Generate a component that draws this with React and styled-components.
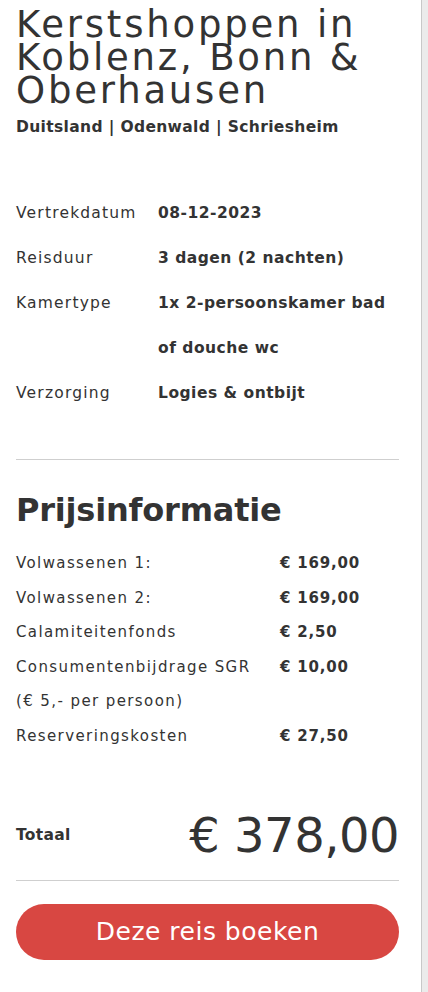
import React from "react";
import styled, { createGlobalStyle } from "styled-components";

const Global = createGlobalStyle`
  html, body { margin: 0; padding: 0; background: #ebebeb; }
  body { font-family: "DejaVu Sans", "Noto Sans", sans-serif; color: #333; }
  * { box-sizing: border-box; }
`;

const Page = styled.div`
  display: flex;
  min-height: 992px;
  background: #ebebeb;
`;

const Panel = styled.div`
  width: 422px;
  background: #fff;
  border-right: 1px solid #c8c8c8;
  padding: 8px 22px 0 16px;
  display: flex;
  flex-direction: column;
`;

const Title = styled.h1`
  margin: 0;
  font-weight: 400;
  font-size: 37px;
  line-height: 33px;
  letter-spacing: 2.8px;
  color: #333;
`;

const Sub = styled.div`
  margin-top: 10px;
  font-weight: 700;
  font-size: 15.5px;
  line-height: 20px;
  letter-spacing: 0.35px;
`;

const Details = styled.div`
  margin-top: 54px;
  display: grid;
  grid-template-columns: 142px 1fr;
`;

const DLabel = styled.div`
  font-size: 15.5px;
  line-height: 45px;
  letter-spacing: 1.2px;
`;

const DValue = styled.div`
  font-size: 15.5px;
  line-height: 45px;
  font-weight: 700;
  letter-spacing: 0.5px;
`;

const Rule = styled.hr`
  border: 0;
  border-top: 1px solid #cfcfcf;
  margin: ${(p) => p.$m || "0"};
`;

const H2 = styled.h2`
  margin: 30px 0 16px;
  font-size: 32px;
  line-height: 40px;
  font-weight: 700;
  letter-spacing: -0.2px;
`;

const Prices = styled.div`
  display: grid;
  grid-template-columns: 264px 1fr;
`;

const PLabel = styled.div`
  font-size: 15px;
  line-height: 34.6px;
  letter-spacing: 1.4px;
  white-space: nowrap;
`;

const PValue = styled.div`
  font-size: 15px;
  line-height: 34.6px;
  font-weight: 700;
  letter-spacing: 0.8px;
`;

const TotalRow = styled.div`
  margin-top: 46px;
  display: flex;
  align-items: center;
  justify-content: space-between;
  height: 70px;
`;

const TotalLabel = styled.div`
  font-size: 15.5px;
  font-weight: 700;
  letter-spacing: 0.3px;
`;

const TotalValue = styled.div`
  font-size: 48px;
  font-weight: 400;
  letter-spacing: -0.5px;
  line-height: 1;
`;

const Button = styled.button`
  margin-top: 23px;
  height: 56px;
  width: 100%;
  border: 0;
  border-radius: 28px;
  background: #d84742;
  color: #fff;
  font-family: "DejaVu Sans", sans-serif;
  font-size: 25px;
  font-weight: 400;
  letter-spacing: 0.5px;
  cursor: pointer;
`;

const details = [
  ["Vertrekdatum", "08-12-2023"],
  ["Reisduur", "3 dagen (2 nachten)"],
  ["Kamertype", "1x 2-persoonskamer bad"],
  ["", "of douche wc"],
  ["Verzorging", "Logies & ontbijt"],
];

const prices = [
  ["Volwassenen 1:", "€ 169,00"],
  ["Volwassenen 2:", "€ 169,00"],
  ["Calamiteitenfonds", "€ 2,50"],
  ["Consumentenbijdrage SGR", "€ 10,00"],
  ["(€ 5,- per persoon)", ""],
  ["Reserveringskosten", "€ 27,50"],
];

export default function App() {
  return (
    <>
      <Global />
      <Page>
        <Panel>
          <Title>Kerstshoppen in Koblenz, Bonn &amp; Oberhausen</Title>
          <Sub>Duitsland | Odenwald | Schriesheim</Sub>
          <Details>
            {details.map(([l, v], i) => (
              <React.Fragment key={i}>
                <DLabel>{l}</DLabel>
                <DValue>{v}</DValue>
              </React.Fragment>
            ))}
          </Details>
          <Rule $m="43px 0 0" />
          <H2>Prijsinformatie</H2>
          <Prices>
            {prices.map(([l, v], i) => (
              <React.Fragment key={i}>
                <PLabel>{l}</PLabel>
                <PValue>{v}</PValue>
              </React.Fragment>
            ))}
          </Prices>
          <TotalRow>
            <TotalLabel>Totaal</TotalLabel>
            <TotalValue>€ 378,00</TotalValue>
          </TotalRow>
          <Rule $m="10px 0 0" />
          <Button>Deze reis boeken</Button>
        </Panel>
      </Page>
    </>
  );
}
